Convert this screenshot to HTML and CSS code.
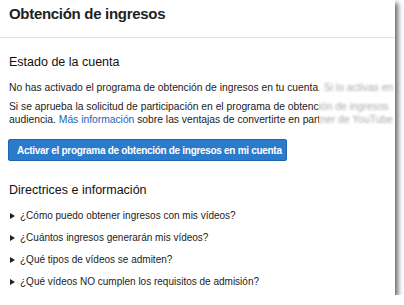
FILE: index.html
```html
<!DOCTYPE html>
<html lang="es">
<head>
    <meta charset="UTF-8">
    <title>Obtención de ingresos</title>
    <link rel="stylesheet" href="styles.css">
</head>
<body>
    <div class="panel">
        <h1 class="page-title">Obtención de ingresos</h1>
        <div class="section">
            <h2>Estado de la cuenta</h2>
            <p class="status">No has activado el programa de obtención de ingresos en tu cuenta. Si lo activas en</p>
            <p class="info">Si se aprueba la solicitud de participación en el programa de obtención de ingresos<br>audiencia. <a href="#">Más información</a> sobre las ventajas de convertirte en partner de YouTube</p>
            <button class="activate">Activar el programa de obtención de ingresos en mi cuenta</button>
        </div>
        <div class="section">
            <h2 class="second">Directrices e información</h2>
            <ul class="faq">
                <li>¿Cómo puedo obtener ingresos con mis vídeos?</li>
                <li>¿Cuántos ingresos generarán mis vídeos?</li>
                <li>¿Qué tipos de vídeos se admiten?</li>
                <li>¿Qué vídeos NO cumplen los requisitos de admisión?</li>
            </ul>
        </div>
        <div class="fade"></div>
    </div>
</body>
</html>
```

FILE: styles.css
```css
body {
    margin: 0;
    background: #fff;
    font-family: 'Liberation Sans', Arial, sans-serif;
    color: #222;
}
.panel {
    position: relative;
    width: 395px;
    height: 295px;
    background: #fff;
    overflow: hidden;
    box-shadow: 3px 3px 5px rgba(0, 0, 0, 0.6);
}
.page-title {
    margin: 0;
    padding: 5px 9px 0;
    height: 32px;
    font-size: 15px;
    letter-spacing: -0.3px;
    font-weight: bold;
    color: #222;
    border-bottom: 1px solid #e2e2e2;
}
.section {
    padding: 0 9px;
}
h2 {
    margin: 17px 0 0;
    font-size: 12.5px;
    line-height: 15px;
    font-weight: normal;
    color: #111;
}
h2.second {
    margin-top: 22px;
}
.status,
.info {
    font-size: 10.3px;
    line-height: 13px;
    white-space: nowrap;
    color: #222;
}
.status {
    margin: 11px 0 0;
}
.info {
    margin: 6px 0 0;
}
.info a {
    color: #1a64b5;
    text-decoration: none;
}
.activate {
    display: block;
    margin: 13px 0 0 -1px;
    width: 279px;
    height: 22px;
    padding: 0 0 0 8px;
    text-align: left;
    font-family: inherit;
    font-size: 10px;
    letter-spacing: -0.3px;
    font-weight: bold;
    color: #fff;
    background: #2a7bcb;
    border: 1px solid #1f65ad;
    border-radius: 2px;
}
.faq {
    list-style: none;
    margin: 7px 0 0;
    padding: 0;
}
.faq li {
    position: relative;
    padding-left: 11px;
    font-size: 10px;
    line-height: 22px;
    color: #222;
}
.faq li::before {
    content: '';
    position: absolute;
    left: 1px;
    top: 8px;
    border-left: 5px solid #222;
    border-top: 3px solid transparent;
    border-bottom: 3px solid transparent;
}
/* faded part of the cropped text */
.fade {
    position: absolute;
    left: 319px;
    top: 78px;
    width: 76px;
    height: 48px;
    background: rgba(255, 255, 255, 0.62);
    backdrop-filter: blur(1px);
}
```
